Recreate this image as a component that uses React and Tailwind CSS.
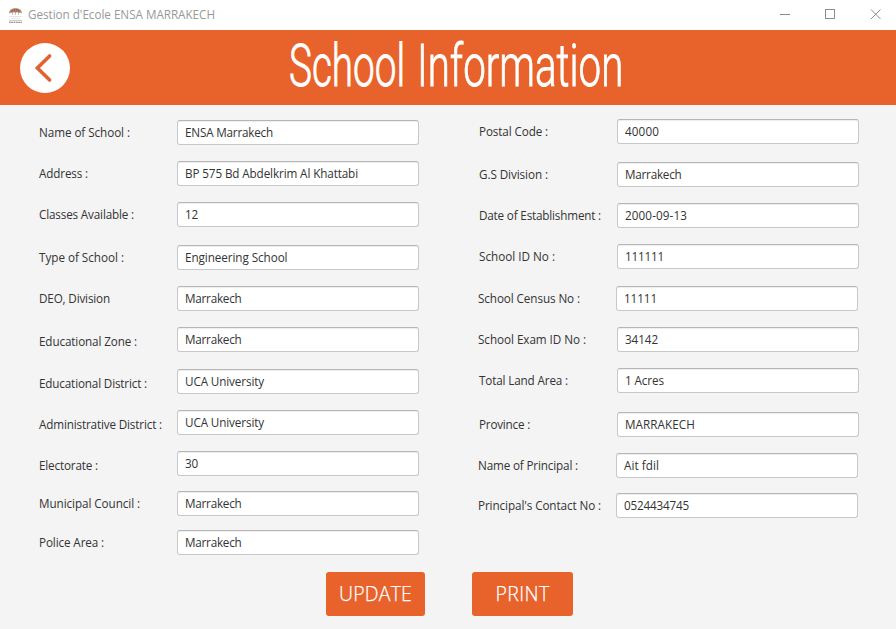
import { useLayoutEffect, useRef } from 'react';

// Text that spreads its letters so the line is exactly `width` pixels wide.
function Fit({ width, children, className = '' }) {
  const ref = useRef(null);
  useLayoutEffect(() => {
    const el = ref.current;
    el.style.letterSpacing = '0px';
    const natural = el.getBoundingClientRect().width;
    el.style.letterSpacing = `${(width - natural) / children.length}px`;
  }, [width, children]);
  return (
    <span ref={ref} className={`inline-block whitespace-pre ${className}`}>
      {children}
    </span>
  );
}

// Word squeezed horizontally to `width` pixels.
function Condensed({ width, children }) {
  const ref = useRef(null);
  useLayoutEffect(() => {
    const el = ref.current;
    el.style.transform = `scaleX(${width / el.offsetWidth})`;
  }, [width, children]);
  return (
    <span className="block" style={{ width }}>
      <span ref={ref} className="inline-block origin-left whitespace-pre">
        {children}
      </span>
    </span>
  );
}

const left = [
  { label: 'Name of School :', lw: 91, value: 'ENSA Marrakech', vw: 88 },
  { label: 'Address :', lw: 49, value: 'BP 575 Bd Abdelkrim Al Khattabi', vw: 173, gap: 'mt-4' },
  { label: 'Classes Available :', lw: 95, value: '12', vw: 13, gap: 'mt-4' },
  { label: 'Type of School :', lw: 85, value: 'Engineering School', vw: 102.5, gap: 'mt-[18px]' },
  { label: 'DEO, Division', lw: 71, value: 'Marrakech', vw: 56.5, gap: 'mt-4' },
  { label: 'Educational Zone :', lw: 98, value: 'Marrakech', vw: 56.5, gap: 'mt-4', drop: true },
  { label: 'Educational District :', lw: 108, value: 'UCA University', vw: 79, gap: 'mt-[17px]', drop: true },
  { label: 'Administrative District :', lw: 123, value: 'UCA University', vw: 79, gap: 'mt-4', drop: true },
  { label: 'Electorate :', lw: 59, value: '30', vw: 13, gap: 'mt-4', drop: true },
  { label: 'Municipal Council :', lw: 101, value: 'Marrakech', vw: 56.5, gap: 'mt-[15px]' },
  { label: 'Police Area :', lw: 65, value: 'Marrakech', vw: 56.5, gap: 'mt-[14px]' },
];

const right = [
  { label: 'Postal Code :', lw: 69, value: '40000', vw: 34 },
  { label: 'G.S Division :', lw: 69, value: 'Marrakech', vw: 56.5, gap: 'mt-[18px]' },
  { label: 'Date of Establishment :', lw: 122, value: '2000-09-13', vw: 62, gap: 'mt-4' },
  { label: 'School ID No :', lw: 76, value: '111111', vw: 39, gap: 'mt-4' },
  { label: 'School Census No :', lw: 102, value: '11111', vw: 33, gap: 'mt-[17px]', shift: true },
  { label: 'School Exam ID No :', lw: 108, value: '34142', vw: 33, gap: 'mt-4', pull: true },
  { label: 'Total Land Area :', lw: 89, value: '1 Acres', vw: 39, gap: 'mt-4' },
  { label: 'Province :', lw: 51, value: 'MARRAKECH', vw: 70, gap: 'mt-[19px]' },
  { label: 'Name of Principal :', lw: 100, value: 'Ait fdil', vw: 35, gap: 'mt-4', shift: true },
  { label: "Principal's Contact No :", lw: 123, value: '0524434745', vw: 65, gap: 'mt-[15px]', shift: true },
];

function Row({ label, lw, value, vw, gap = '', drop, shift, pull }) {
  return (
    <div className={`flex h-[25px] ${gap} ${shift ? '-ml-px' : ''}`}>
      <div
        className={`shrink-0 leading-[25px] ${pull ? '-ml-px w-[139px]' : 'w-[138px]'} ${drop ? 'pt-0.5' : ''}`}
      >
        <Fit width={lw}>{label}</Fit>
      </div>
      <div className="h-[25px] w-[242px] rounded-[3px] border border-[#c8c8c8] border-t-[#b5b5b5] bg-white pl-[7px] leading-[23px] shadow-[inset_0_2px_1px_-1px_#eeeeee]">
        <Fit width={vw}>{value}</Fit>
      </div>
    </div>
  );
}

function TitleBar() {
  return (
    <div className="flex h-[30px] items-center bg-white pl-2 text-[#999999]">
      <svg width="15" height="17" viewBox="0 0 15 17" className="mr-[5px]">
        <path d="M1 6.5C1.2 3 4 1.2 7.5 1.2S13.800 3 14 6.500l-2-1-1.500.5L9 5 7.500 6 6 5 4.500 6 3 5.500z" fill="#b08572" />
        <path d="M3 5 5 2.500M6.500 4.500V2M9 4.500 8.500 2M12 5 10 2.500" stroke="#7d5545" strokeWidth=".7" />
        <path d="M4.500 6v2M7.500 6v2M10.500 6v2" stroke="#dcc3b6" />
        <path d="M1 9.500h13M3 11.300h9" stroke="#dde2e7" strokeWidth=".8" />
        <path d="M1 13.500h13" stroke="#d6c8c2" strokeWidth="1.200" />
        <path d="M1 15.300h13" stroke="#a8928a" strokeWidth="1.200" strokeDasharray="1.800 .5" />
      </svg>
      <Fit width={187}>{"Gestion d'Ecole ENSA MARRAKECH"}</Fit>
      <svg width="102" height="12" viewBox="0 0 102 12" className="mr-[14px] ml-auto" fill="none" stroke="#8c8c8c">
        <path d="M0 5.500h10" />
        <rect x="45.500" y=".5" width="9" height="9" />
        <path d="m91 .5 9.500 9.500m0-9.500L91 10" />
      </svg>
    </div>
  );
}

export default function App() {
  return (
    <div className="flex h-[629px] w-[896px] flex-col overflow-hidden bg-[#f4f4f4] font-['Open_Sans','Noto_Sans',sans-serif] text-[11.7px] text-[#333333]">
      <TitleBar />
      <header className="flex h-[75px] shrink-0 bg-[#e8632b]">
        <button className="mt-[13px] ml-5 flex size-[50px] shrink-0 items-center justify-center rounded-full bg-white">
          <svg width="50" height="50" viewBox="0 0 50 50" fill="none" stroke="#e06233" strokeWidth="3.6" strokeLinecap="round" strokeLinejoin="miter">
            <path d="M29.600 13 17.400 25l12.200 12" />
          </svg>
        </button>
        <h1 className="ml-[219px] flex gap-[12px] font-['Roboto',sans-serif] text-[59px] leading-[71px] font-light text-white [-webkit-text-stroke:0.9px_white]">
          <Condensed width={116}>School</Condensed>
          <Condensed width={206}>Information</Condensed>
        </h1>
      </header>
      <main className="flex h-[467px] shrink-0 pl-[39px]">
        <section className="w-[440px] pt-[15px]">
          {left.map((row) => (
            <Row key={row.label} {...row} />
          ))}
        </section>
        <section className="pt-[14px]">
          {right.map((row) => (
            <Row key={row.label} {...row} />
          ))}
        </section>
      </main>
      <footer className="flex gap-[47px] pl-[326px] text-[19.5px] font-light text-white [-webkit-text-stroke:0.25px_white]">
        <button className="h-11 w-[99px] rounded-[3px] bg-[#e8632b]">
          <Fit width={73}>UPDATE</Fit>
        </button>
        <button className="h-11 w-[101px] rounded-[3px] bg-[#e8632b]">
          <Fit width={54}>PRINT</Fit>
        </button>
      </footer>
    </div>
  );
}
